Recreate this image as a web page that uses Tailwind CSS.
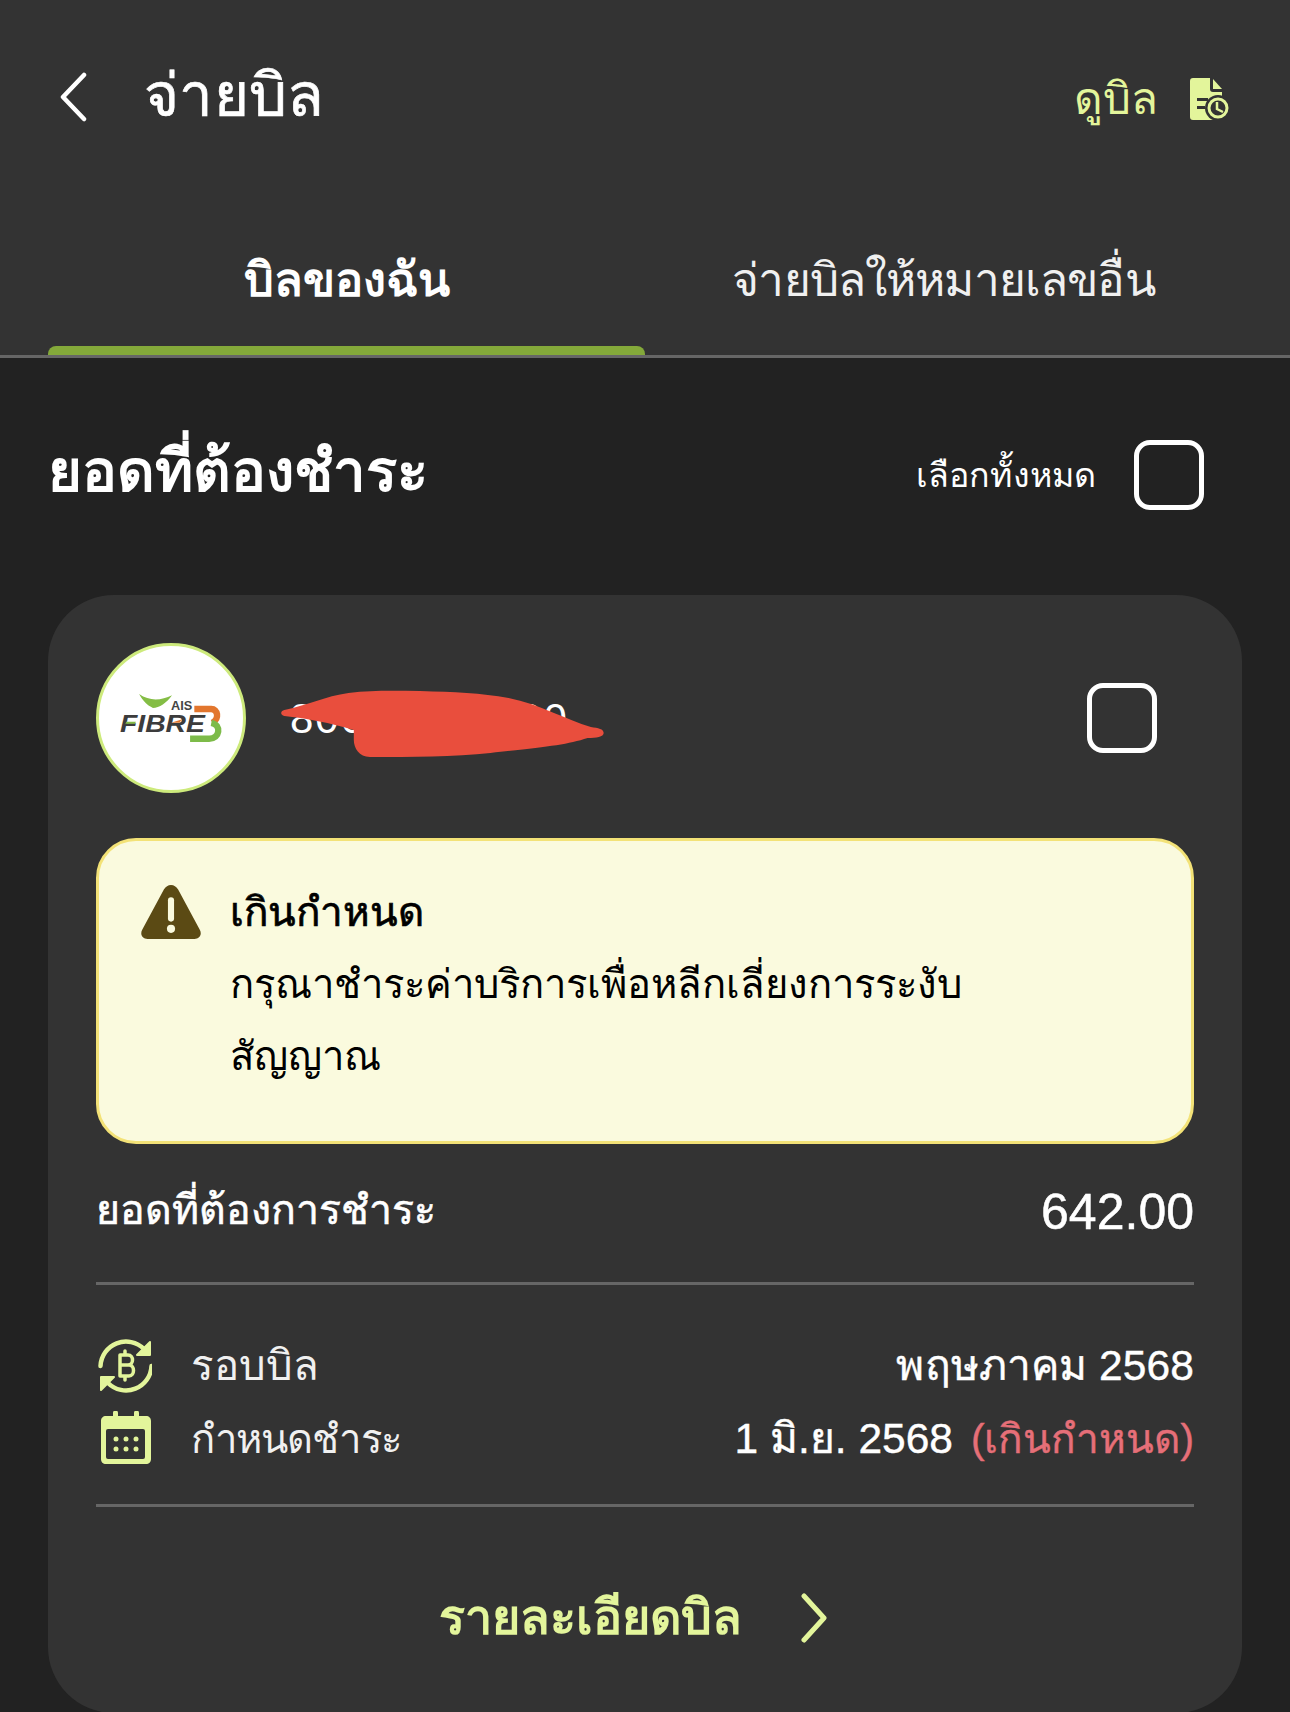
<!DOCTYPE html>
<html lang="th">
<head>
    <meta charset="UTF-8">
    <meta name="viewport" content="width=device-width, initial-scale=1.0">
    <title>จ่ายบิล</title>
    <script src="https://cdn.jsdelivr.net/npm/@tailwindcss/browser@4"></script>
</head>
<body class="bg-[#222222] font-['Liberation_Sans','Noto_Sans',sans-serif] w-[1290px] h-[1712px] overflow-hidden text-white">
    <!-- Header -->
    <header class="bg-[#333333] h-[358px] flex flex-col border-b-[3px] border-[#666666]">
        <div class="h-[192px] flex items-center pl-[58px] pr-[60px]">
            <svg class="w-[30px] h-[50px] mt-[2px]" viewBox="0 0 30 50" fill="none" stroke="#ffffff" stroke-width="4.5" stroke-linecap="round" stroke-linejoin="round"><path d="M26 3 5 25l21 22"/></svg>
            <h1 class="ml-[56px] text-[60px] tracking-[0.3px] [-webkit-text-stroke:0.7px_white] leading-none">จ่ายบิล</h1>
            <div class="ml-auto mt-[6px] flex items-center gap-[32px] text-[#e3f59b]">
                <span class="text-[44px] leading-none">ดูบิล</span>
                <svg class="w-[40px] h-[42px]" viewBox="0 0 40 42" fill="#e3f59b">
                    <path d="M3 0h17v11c0 2 1 3 3 3h9v25a3 3 0 0 1-3 3H3a3 3 0 0 1-3-3V3a3 3 0 0 1 3-3z"/>
                    <path d="M23 1l9 10h-9z"/>
                    <circle cx="28" cy="30" r="13" fill="#333333"/>
                    <rect x="7" y="20" width="11" height="3" fill="#333333"/>
                    <rect x="7" y="28" width="8" height="3" fill="#333333"/>
                    <circle cx="28" cy="30" r="9" fill="none" stroke="#e3f59b" stroke-width="3"/>
                    <path d="M27 24v7l6 3" fill="none" stroke="#e3f59b" stroke-width="2.5"/>
                </svg>
            </div>
        </div>
        <div class="flex-1 flex items-stretch pl-[48px]">
            <div class="relative w-[597px] flex justify-center pt-[64px]">
                <span class="text-[47px] font-bold leading-none">บิลของฉัน</span>
                <div class="absolute left-0 right-0 bottom-0 h-[9px] bg-[#84a93a] rounded-t-[8px]"></div>
            </div>
            <div class="flex-1 flex justify-center pt-[65px] pr-[48px]">
                <span class="text-[46px] tracking-[-0.85px] leading-none text-[#f0f0f0]">จ่ายบิลให้หมายเลขอื่น</span>
            </div>
        </div>
    </header>

    <!-- Section title -->
    <div class="h-[237px] flex items-start pl-[48px] pr-[86px] pt-[84px]">
        <h2 class="text-[58px] font-semibold leading-none">ยอดที่ต้องชำระ</h2>
        <div class="ml-auto flex items-center gap-[38px] -mt-[2px]">
            <span class="text-[34px] tracking-[0.1px] leading-none">เลือกทั้งหมด</span>
            <div class="w-[70px] h-[70px] rounded-[16px] border-[5px] border-white"></div>
        </div>
    </div>

    <!-- Bill card -->
    <section class="mx-[48px] bg-[#333333] rounded-[66px] px-[48px] pt-[48px] h-[1118px]">
        <div class="flex items-center h-[150px] pr-[37px]">
            <div class="w-[150px] h-[150px] rounded-full bg-white border-[3px] border-[#cdea7c] flex items-center justify-center">
                <svg class="w-[103px] h-[48px]" viewBox="2 3 97 45">
                    <path d="M20 3c10 7 21 6 31 1-5 7-12 12-18 12-5-2-10-7-13-13z" fill="#84bd45"/>
                    <text x="50" y="18" font-family="Liberation Sans" font-size="12" font-weight="700" fill="#444444">AIS</text>
                    <text x="2" y="39" font-family="Liberation Sans" font-size="23" font-weight="700" font-style="italic" textLength="80" lengthAdjust="spacingAndGlyphs" fill="#3c3c3c">FIBRE</text>
                    <path d="M8 29h9l-1 2H7z" fill="#84bd45"/>
                    <path d="M50 30l10-3-2 3h-9z" fill="#e2762e"/>
                    <path d="M72 17h16c6 0 8 9 1 13" fill="none" stroke="#e2762e" stroke-width="6"/>
                    <path d="M88 30c10 2 8 15-2 15H68" fill="none" stroke="#7dbb49" stroke-width="6"/>
                </svg>
            </div>
            <div class="relative ml-[33px] w-[305px] h-[80px]">
                <span class="absolute left-[11px] top-[20px] text-[42px] tracking-[2px] leading-none">80000000000</span>
                <svg class="absolute -left-[1px] top-0 w-[331px] h-[80px]" viewBox="0 0 310 80" preserveAspectRatio="none" fill="#e94e3d">
                    <path d="M6 32C25 28 45 18 66 15 90 12 110 13 133 13c32 1 57 2 83 7 29 6 54 22 77 29 7 1 12 2 12 6s-7 5-15 5c-20 7-40 9-91 15-34 4-74 4-113 4-10 0-15-9-15-17V52C50 45 25 40 6 38c-4-1-4-5 0-6z"/>
                </svg>
            </div>
            <div class="ml-auto w-[70px] h-[70px] rounded-[16px] border-[5px] border-white"></div>
        </div>

        <div class="mt-[45px] h-[306px] rounded-[40px] bg-[#fafade] border-[3px] border-[#f3e277] flex pl-[42px] pt-[38px] text-black">
            <svg class="w-[60px] h-[54px] shrink-0 mt-[6px]" viewBox="2 2 58 53">
                <path d="M31 2c3 0 5 1.500 7 4.500l21 39c3 5 0 9.500-5 9.500H8c-5 0-8-4.500-5-9.500l21-39C26 3.500 28 2 31 2z" fill="#5b4a14"/>
                <rect x="28" y="14" width="6" height="24" rx="3" fill="#fafade"/>
                <circle cx="31" cy="45" r="4" fill="#fafade"/>
            </svg>
            <div class="ml-[29px] text-[40px] leading-[72px] -mt-[3px]">
                <p class="text-[40.4px] [-webkit-text-stroke:0.7px_black]">เกินกำหนด</p>
                <p class="w-[800px]">กรุณาชำระค่าบริการเพื่อหลีกเลี่ยงการระงับ<br>สัญญาณ</p>
            </div>
        </div>

        <div class="flex items-center justify-between h-[141px] border-b-[3px] border-[#666666]">
            <span class="text-[41px] [-webkit-text-stroke:0.6px_white] leading-none -mt-[6px]">ยอดที่ต้องการชำระ</span>
            <span class="text-[50px] [-webkit-text-stroke:0.5px_white] leading-none -mt-[2px]">642.00</span>
        </div>

        <div class="h-[222px] border-b-[3px] border-[#666666] pt-[53px] flex flex-col gap-[17px]">
            <div class="flex items-center h-[56px]">
                <svg class="w-[56px] h-[56px]" viewBox="-2 0 56 56" fill="none" stroke="#e3f59b" stroke-width="4.5" stroke-linecap="round" stroke-linejoin="round">
                    <path d="M2.500 28A25.500 25.500 0 0 1 46 11"/>
                    <path d="M53.500 28A25.500 25.500 0 0 1 10 45"/>
                    <path d="M52 4v13H39zM3 52V39h13z" fill="#e3f59b" stroke-width="2"/>
                    <path d="M22 17h8c6 0 6 10 0 10h-8 9c6 0 6 11 0 11h-9zM27 13v4M27 38v4" stroke-width="3.5"/>
                </svg>
                <span class="ml-[39px] text-[42px] leading-none text-[#f0f0f0]">รอบบิล</span>
                <span class="ml-auto text-[42.5px] tracking-[0.1px] [-webkit-text-stroke:0.4px_white] leading-none">พฤษภาคม 2568</span>
            </div>
            <div class="flex items-center h-[56px]">
                <svg class="w-[56px] h-[56px]" viewBox="-2 0 56 56">
                    <path d="M8 5h7V2a2.500 2.500 0 0 1 5 0v3h16V2a2.500 2.500 0 0 1 5 0v3h7c3 0 5 2 5 5v38c0 3-2 5-5 5H8c-3 0-5-2-5-5V10c0-3 2-5 5-5z" fill="#e3f59b"/>
                    <rect x="8" y="18" width="39" height="30" rx="2" fill="#333333"/>
                    <g fill="#e3f59b">
                        <circle cx="18" cy="28" r="2.500"/><circle cx="28" cy="28" r="2.500"/><circle cx="38" cy="28" r="2.500"/>
                        <circle cx="18" cy="38" r="2.500"/><circle cx="28" cy="38" r="2.500"/><circle cx="38" cy="38" r="2.500"/>
                    </g>
                </svg>
                <span class="ml-[39px] text-[40px] tracking-[-0.9px] leading-none text-[#f0f0f0]">กำหนดชำระ</span>
                <span class="ml-auto text-[42.5px] [-webkit-text-stroke:0.4px_white] leading-none">1 มิ.ย. 2568</span>
                <span class="ml-[18px] text-[40.6px] [-webkit-text-stroke:0.4px_#e66f78] leading-none text-[#e66f78]">(เกินกำหนด)</span>
            </div>
        </div>

        <div class="h-[115px] mt-[86px] pr-[24px] flex items-start justify-center gap-[58px] text-[#e3f59b]">
            <span class="text-[48.5px] font-bold leading-none">รายละเอียดบิล</span>
            <svg class="w-[28px] h-[50px]" viewBox="0 0 28 50" fill="none" stroke="#e3f59b" stroke-width="5" stroke-linecap="round" stroke-linejoin="round"><path d="M4 3l20 22L4 47"/></svg>
        </div>
    </section>
</body>
</html>
